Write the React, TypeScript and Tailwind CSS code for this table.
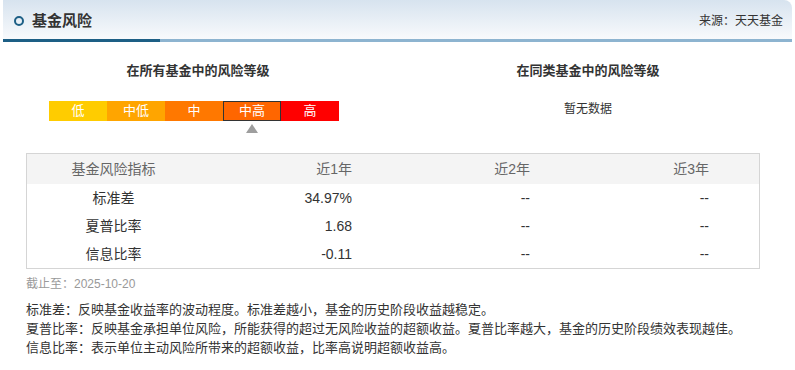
export default function App() {
  const levels = [
    { label: '低', color: 'bg-[#ffcc00]' },
    { label: '中低', color: 'bg-[#ffa500]' },
    { label: '中', color: 'bg-[#ff7800]' },
    { label: '中高', color: 'bg-[#ff6600]', active: true },
    { label: '高', color: 'bg-[#ff0000]' },
  ];

  const rows = [
    { name: '标准差', y1: '34.97%', y2: '--', y3: '--' },
    { name: '夏普比率', y1: '1.68', y2: '--', y3: '--' },
    { name: '信息比率', y1: '-0.11', y2: '--', y3: '--' },
  ];

  return (
    <div className="w-[795px] h-[370px] bg-white overflow-hidden text-[#333] font-['Liberation_Sans','Noto_Sans_CJK_SC',sans-serif]">
      {/* header */}
      <div className="mx-[3px]">
        <div className="h-[39px] flex items-center justify-between rounded-tr-[8px] bg-gradient-to-b from-[#d7e3ef] to-[#f8fafc] pt-[3px]">
          <div className="flex items-center">
            <span className="ml-[11px] w-[10px] h-[10px] rounded-full border-2 border-[#1d5f85]" />
            <span className="ml-[8px] text-[15px] font-bold leading-[20px]">基金风险</span>
          </div>
          <span className="mr-[9px] text-[12px] leading-[20px]">来源：天天基金</span>
        </div>
        <div className="flex h-[3px]">
          <div className="w-[157px] bg-[#1d5f85]" />
          <div className="flex-1 bg-[#8db4d0]" />
        </div>
      </div>

      {/* risk levels */}
      <div className="flex ml-[3px]">
        <div className="w-[390px] flex flex-col items-center pt-[19px]">
          <h3 className="text-[13px] font-bold leading-[20px]">在所有基金中的风险等级</h3>
          <div className="mt-[20px] flex self-start ml-[46px]">
            {levels.map((l) => (
              <div
                key={l.label}
                className={`w-[58px] h-[20px] flex items-center justify-center text-white text-[13px] ${l.color} ${l.active ? 'border border-[#333]' : ''}`}
              >
                {l.label}
              </div>
            ))}
          </div>
          <div className="self-start ml-[243px] mt-[3px] w-0 h-0 border-l-[6px] border-r-[6px] border-b-[9px] border-l-transparent border-r-transparent border-b-[#9e9e9e]" />
        </div>
        <div className="w-[390px] flex flex-col items-center pt-[19px]">
          <h3 className="text-[13px] font-bold leading-[20px]">在同类基金中的风险等级</h3>
          <p className="mt-[18px] text-[12px] leading-[20px]">暂无数据</p>
        </div>
      </div>

      {/* table */}
      <div className="mx-[26px] w-[734px] mt-[20px] border border-[#d5d5d5]">
        <div className="grid grid-cols-[173px_152px_178px_179px_1fr] h-[30px] items-center bg-[#f4f4f4] text-[14px] text-[#666]">
          <span className="text-center">基金风险指标</span>
          <span className="text-right">近1年</span>
          <span className="text-right">近2年</span>
          <span className="text-right">近3年</span>
          <span />
        </div>
        {rows.map((r) => (
          <div key={r.name} className="grid grid-cols-[173px_152px_178px_179px_1fr] h-[28px] items-center text-[14px]">
            <span className="text-center">{r.name}</span>
            <span className="text-right">{r.y1}</span>
            <span className="text-right">{r.y2}</span>
            <span className="text-right">{r.y3}</span>
            <span />
          </div>
        ))}
      </div>

      <p className="ml-[26px] mt-[5px] text-[12px] leading-[20px] text-[#999]">截止至：2025-10-20</p>

      <div className="ml-[26px] mt-[6px] text-[13px] leading-[19px]">
        <p>标准差：反映基金收益率的波动程度。标准差越小，基金的历史阶段收益越稳定。</p>
        <p>夏普比率：反映基金承担单位风险，所能获得的超过无风险收益的超额收益。夏普比率越大，基金的历史阶段绩效表现越佳。</p>
        <p>信息比率：表示单位主动风险所带来的超额收益，比率高说明超额收益高。</p>
      </div>
    </div>
  );
}
